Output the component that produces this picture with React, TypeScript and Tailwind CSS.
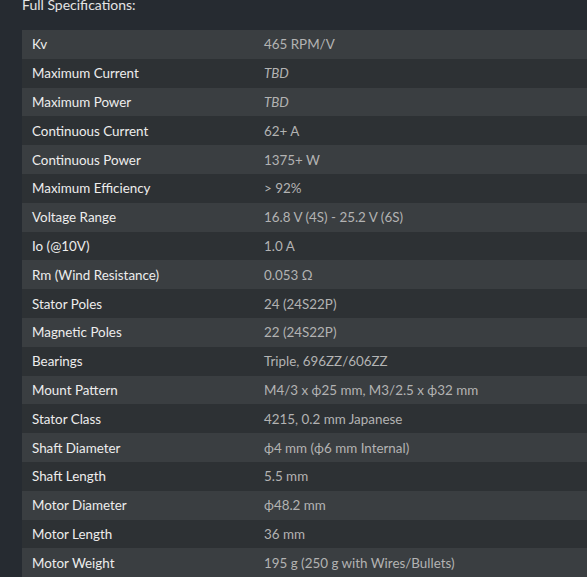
const specs: [string, string, boolean?][] = [
  ["Kv", "465 RPM/V"],
  ["Maximum Current", "TBD", true],
  ["Maximum Power", "TBD", true],
  ["Continuous Current", "62+ A"],
  ["Continuous Power", "1375+ W"],
  ["Maximum Efficiency", "> 92%"],
  ["Voltage Range", "16.8 V (4S) - 25.2 V (6S)"],
  ["Io (@10V)", "1.0 A"],
  ["Rm (Wind Resistance)", "0.053 Ω"],
  ["Stator Poles", "24 (24S22P)"],
  ["Magnetic Poles", "22 (24S22P)"],
  ["Bearings", "Triple, 696ZZ/606ZZ"],
  ["Mount Pattern", "M4/3 x ϕ25 mm, M3/2.5 x ϕ32 mm"],
  ["Stator Class", "4215, 0.2 mm Japanese"],
  ["Shaft Diameter", "ϕ4 mm (ϕ6 mm Internal)"],
  ["Shaft Length", "5.5 mm"],
  ["Motor Diameter", "ϕ48.2 mm"],
  ["Motor Length", "36 mm"],
  ["Motor Weight", "195 g (250 g with Wires/Bullets)"],
];

export default function App() {
  return (
    <div className="min-h-screen bg-[#262b31] text-[13.4px] font-['Lato',sans-serif] overflow-hidden">
      <div className="pl-[22px] -mt-[4px]">
        {/* Heading */}
        <h3 className="text-[14px] text-[#e4e4e4] leading-[17px]">Full Specifications:</h3>
        <table className="mt-[17px] w-[640px] border-collapse">
          <tbody>
            {specs.map(([label, value, italic], i) => (
              <tr key={label} className={i % 2 === 0 ? "bg-[#3a3e41]" : "bg-[#2d3134]"}>
                <td className="w-[232px] h-[28.8px] px-[10px] py-0 text-[#ededed]">{label}</td>
                <td className={`px-[10px] py-0 text-[#b3b3b3] ${italic ? "italic" : ""}`}>{value}</td>
              </tr>
            ))}
          </tbody>
        </table>
      </div>
    </div>
  );
}
